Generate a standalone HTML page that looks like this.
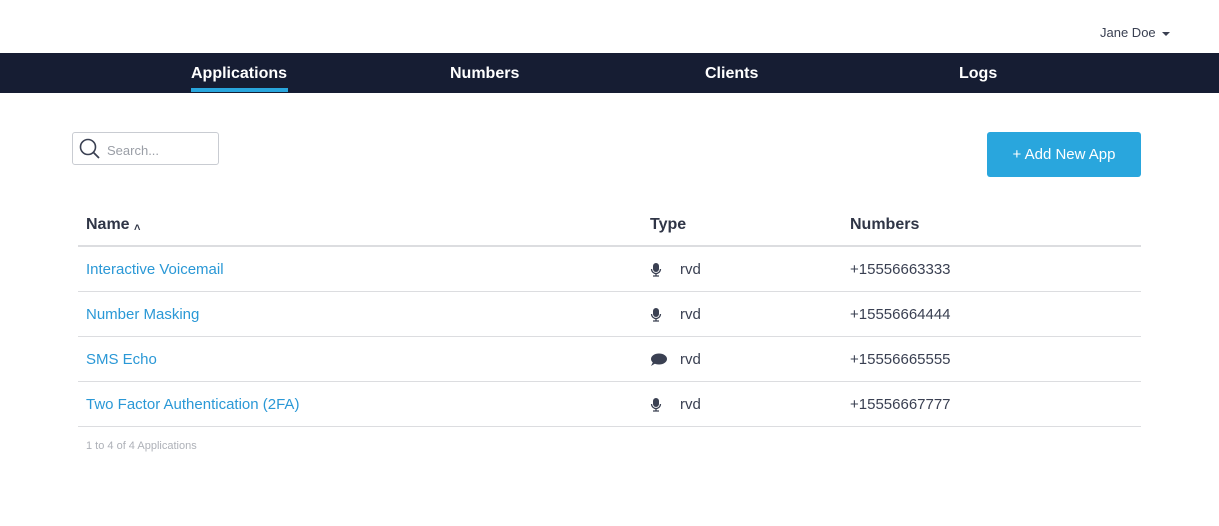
<!DOCTYPE html>
<html><head><style>
*{margin:0;padding:0;box-sizing:border-box}
body{width:1219px;height:526px;background:#fff;font-family:"Liberation Sans",sans-serif;position:relative;overflow:hidden}
.user{position:absolute;left:1100px;top:25px;font-size:13px;color:#3a4052}
.user:after{content:"";display:inline-block;margin-left:6px;border-left:4px solid transparent;border-right:4px solid transparent;border-top:4px solid #3a4052;vertical-align:middle}
.nav{position:absolute;left:0;top:53px;width:1219px;height:40px;background:#161d33}
.nav a{position:absolute;top:12px;color:#fff;font-weight:bold;font-size:16px;text-decoration:none}
.ul{position:absolute;left:191px;top:88px;width:97px;height:4px;background:#29a6dd}
.search{position:absolute;left:72px;top:132px;width:147px;height:33px;border:1px solid #c9ccd2;border-radius:3px}
.search span{position:absolute;left:34px;top:10px;font-size:13px;color:#9a9ea6}
.btn{position:absolute;left:987px;top:132px;width:154px;height:45px;background:#29a6dd;border-radius:3px;color:#fff;font-size:15px;text-align:center;line-height:45px}
.th{position:absolute;top:216px;font-weight:bold;font-size:16px;color:#2f3546}
.line{position:absolute;left:78px;width:1063px;height:1px;background:#dcdde0}
.row{position:absolute;left:0;width:1219px;font-size:15px}
.row .n{position:absolute;left:86px;color:#2a98d6}
.row .t{position:absolute;left:680px;color:#3a4052}
.row .p{position:absolute;left:850px;color:#3a4052}
.row svg{position:absolute;left:650px;top:1px}
.foot{position:absolute;left:86px;top:440px;font-size:11px;color:#aeb1b8}
</style></head><body>
<div class="user">Jane Doe</div>
<div class="nav">
<a style="left:191px">Applications</a><a style="left:450px">Numbers</a><a style="left:705px">Clients</a><a style="left:959px">Logs</a>
</div>
<div class="ul"></div>
<div class="search"><svg width="24" height="24" style="position:absolute;left:5px;top:4px" viewBox="0 0 24 24"><circle cx="10" cy="10" r="7.5" fill="none" stroke="#3a4052" stroke-width="1.6"/><path d="M15.5 15.5l5.5 5.5" stroke="#3a4052" stroke-width="1.8"/></svg><span>Search...</span></div>
<div class="btn">+ Add New App</div>
<div class="th" style="left:86px">Name <span style="font-size:11px;position:relative;top:2px">&#708;</span></div>
<div class="th" style="left:650px">Type</div>
<div class="th" style="left:850px">Numbers</div>
<div class="line" style="top:245px;height:2px"></div>
<div class="row" style="top:261px"><span class="n">Interactive Voicemail</span><svg width="12" height="16" viewBox="0 0 12 16"><rect x="3" y="1" width="6" height="9" rx="3" fill="#3a4052"/><path d="M1.5 7a4.5 4.5 0 009 0M6 11.5V14M3 14h6" stroke="#3a4052" stroke-width="1.3" fill="none"/></svg><span class="t">rvd</span><span class="p">+15556663333</span></div>
<div class="line" style="top:291px"></div>
<div class="row" style="top:306px"><span class="n">Number Masking</span><svg width="12" height="16" viewBox="0 0 12 16"><rect x="3" y="1" width="6" height="9" rx="3" fill="#3a4052"/><path d="M1.5 7a4.5 4.5 0 009 0M6 11.5V14M3 14h6" stroke="#3a4052" stroke-width="1.3" fill="none"/></svg><span class="t">rvd</span><span class="p">+15556664444</span></div>
<div class="line" style="top:336px"></div>
<div class="row" style="top:351px"><span class="n">SMS Echo</span><svg width="18" height="16" viewBox="0 0 18 16"><ellipse cx="9" cy="7" rx="8" ry="5.5" fill="#3a4052"/><path d="M3 10l-2 4 5-3z" fill="#3a4052"/></svg><span class="t">rvd</span><span class="p">+15556665555</span></div>
<div class="line" style="top:381px"></div>
<div class="row" style="top:396px"><span class="n">Two Factor Authentication (2FA)</span><svg width="12" height="16" viewBox="0 0 12 16"><rect x="3" y="1" width="6" height="9" rx="3" fill="#3a4052"/><path d="M1.5 7a4.5 4.5 0 009 0M6 11.5V14M3 14h6" stroke="#3a4052" stroke-width="1.3" fill="none"/></svg><span class="t">rvd</span><span class="p">+15556667777</span></div>
<div class="line" style="top:426px"></div>
<div class="foot">1 to 4 of 4 Applications</div>
</body></html>
